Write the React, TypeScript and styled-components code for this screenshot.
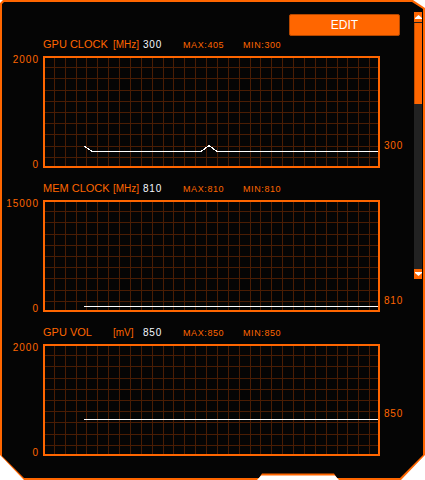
import styled, { createGlobalStyle } from "styled-components";

const ORANGE = "#ff6600";
const GRID = "#4a1d04";

const GlobalStyle = createGlobalStyle`
  html, body {
    margin: 0;
    padding: 0;
    background: #ffffff;
  }
  body {
    font-family: "Liberation Sans", Arial, sans-serif;
  }
`;

const Frame = styled.div`
  width: 425px;
  height: 480px;
  padding: 2px;
  box-sizing: border-box;
  background: ${ORANGE};
  clip-path: polygon(
    0 3px, 3px 0, 413px 0, 425px 8px, 425px 455px, 401px 480px,
    339px 480px, 335px 475.5px, 261px 475.5px, 257px 480px,
    24px 480px, 0 455px
  );
`;

const Panel = styled.div`
  width: 100%;
  height: 100%;
  display: flex;
  background: #050505;
  clip-path: polygon(
    0 2px, 2px 0, 410px 0, 421px 7px, 421px 453px, 398px 476px,
    335px 476px, 332px 471.5px, 260px 471.5px, 257px 476px,
    22px 476px, 0 454px
  );
`;

const Main = styled.div`
  width: 412px;
  display: flex;
  flex-direction: column;
`;

const Toolbar = styled.div`
  display: flex;
  justify-content: flex-end;
  height: 22px;
  padding: 12px 14px 0 0;
`;

const EditButton = styled.button`
  width: 111px;
  height: 22px;
  padding: 0;
  background: ${ORANGE};
  border: 1px solid #b34700;
  border-radius: 2px;
  color: #ffffff;
  font-family: "Liberation Sans", Arial, sans-serif;
  font-size: 12px;
  cursor: pointer;
`;

const Section = styled.section`
  margin-bottom: 12px;
`;

const TitleRow = styled.div`
  display: grid;
  grid-template-columns: 41px 70px 30px 40px 60px 1fr;
  align-items: baseline;
  height: 20px;
  line-height: 16px;
  color: ${ORANGE};
`;

const Title = styled.span`
  grid-column: 2;
  font-size: 11px;
  white-space: nowrap;
`;

const Unit = styled.span`
  font-size: 10px;
`;

const Value = styled.span`
  font-size: 10px;
  letter-spacing: 0.8px;
  color: #f4f8ff;
`;

const Stat = styled.span`
  font-size: 9px;
  letter-spacing: 0.6px;
`;

const ChartRow = styled.div`
  display: flex;
  height: 112px;
`;

const Axis = styled.div`
  width: 41px;
  padding-right: 4px;
  box-sizing: border-box;
  display: flex;
  flex-direction: column;
  justify-content: space-between;
  align-items: flex-end;
  font-size: 10px;
  line-height: 7px;
  letter-spacing: 1px;
  color: ${ORANGE};
`;

const ChartBox = styled.div`
  width: 337px;
  height: 112px;
  box-sizing: border-box;
  border: 2px solid ${ORANGE};
  svg {
    display: block;
  }
`;

const Markers = styled.div`
  position: relative;
  flex: 1;
`;

const MarkerLabel = styled.span`
  position: absolute;
  left: 4px;
  font-size: 10px;
  line-height: 7px;
  letter-spacing: 0.8px;
  color: ${ORANGE};
`;

const ScrollTrack = styled.div`
  width: 8px;
  height: 267px;
  margin: 10px 1px 0 0;
  display: flex;
  flex-direction: column;
  background: #222222;
`;

const ArrowButton = styled.div`
  height: 10px;
  display: flex;
  align-items: center;
  justify-content: center;
  background: ${ORANGE};
`;

const Thumb = styled.div`
  height: 81px;
  margin-top: 1px;
  background: ${ORANGE};
  border-left: 1px solid #c24d00;
  box-sizing: border-box;
`;

const TrackFill = styled.div`
  flex: 1;
`;

interface ChartData {
  title: string;
  unit: string;
  value: string;
  max: string;
  min: string;
  top: string;
  points: string;
  markerY: number;
}

const charts: ChartData[] = [
  {
    title: "GPU CLOCK",
    unit: "[MHz]",
    value: "300",
    max: "MAX:405",
    min: "MIN:300",
    top: "2000",
    points: "41,90.5 42,90.5 49,95.5 158,95.5 166,89.5 174,95.5 337,95.5",
    markerY: 95,
  },
  {
    title: "MEM CLOCK",
    unit: "[MHz]",
    value: "810",
    max: "MAX:810",
    min: "MIN:810",
    top: "15000",
    points: "41,106.5 337,106.5",
    markerY: 106,
  },
  {
    title: "GPU VOL",
    unit: "[mV]",
    value: "850",
    max: "MAX:850",
    min: "MIN:850",
    top: "2000",
    points: "41,75.5 337,75.5",
    markerY: 75,
  },
];

const W = 337;
const H = 112;
const cols = Array.from({ length: 30 }, (_, i) => Math.round(((i + 1) * W) / 31) + 0.5);
const rows = Array.from({ length: 9 }, (_, i) => Math.round((i + 1) * 11.2) + 0.5);

function Grid({ points }: { points: string }) {
  return (
    <svg width={W - 4} height={H - 4} viewBox={`2 2 ${W - 4} ${H - 4}`}>
      {cols.map((x) => (
        <line key={"c" + x} x1={x} y1={0} x2={x} y2={H} stroke={GRID} strokeWidth={1} shapeRendering="crispEdges" />
      ))}
      {rows.map((y) => (
        <line key={"r" + y} x1={0} y1={y} x2={W} y2={y} stroke={GRID} strokeWidth={1} shapeRendering="crispEdges" />
      ))}
      <polyline points={points} fill="none" stroke="#ffffff" strokeWidth={1.2} shapeRendering="crispEdges" />
    </svg>
  );
}

function UpArrow() {
  return (
    <svg width="7" height="4" viewBox="0 0 7 4">
      <polygon points="3.5,0 7,3 0,3" fill="#fff" />
      <rect x="0" y="3" width="7" height="1" fill="#fff" />
    </svg>
  );
}

function DownArrow() {
  return (
    <svg width="7" height="4" viewBox="0 0 7 4">
      <rect x="0" y="0" width="7" height="1" fill="#fff" />
      <polygon points="0,1 7,1 3.5,4" fill="#fff" />
    </svg>
  );
}

export default function App() {
  return (
    <>
      <GlobalStyle />
      <Frame>
        <Panel>
          <Main>
            <Toolbar>
              <EditButton>EDIT</EditButton>
            </Toolbar>
            {charts.map((c) => (
              <Section key={c.title}>
                <TitleRow>
                  <Title>{c.title}</Title>
                  <Unit>{c.unit}</Unit>
                  <Value>{c.value}</Value>
                  <Stat>{c.max}</Stat>
                  <Stat>{c.min}</Stat>
                </TitleRow>
                <ChartRow>
                  <Axis>
                    <span>{c.top}</span>
                    <span>0</span>
                  </Axis>
                  <ChartBox>
                    <Grid points={c.points} />
                  </ChartBox>
                  <Markers>
                    <MarkerLabel style={{ top: c.markerY - 9 }}>{c.value}</MarkerLabel>
                  </Markers>
                </ChartRow>
              </Section>
            ))}
          </Main>
          <ScrollTrack>
            <ArrowButton>
              <UpArrow />
            </ArrowButton>
            <Thumb />
            <TrackFill />
            <ArrowButton>
              <DownArrow />
            </ArrowButton>
          </ScrollTrack>
        </Panel>
      </Frame>
    </>
  );
}
